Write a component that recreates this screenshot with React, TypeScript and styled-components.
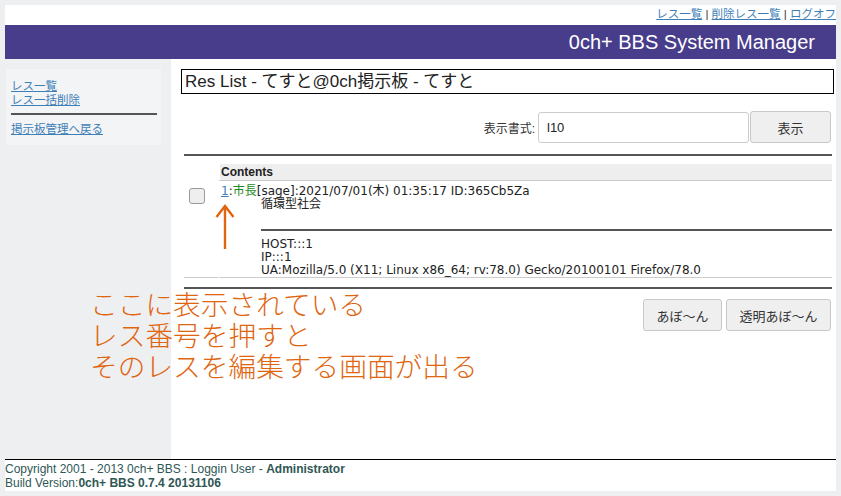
import React from "react";
import styled, { createGlobalStyle } from "styled-components";

const GlobalStyle = createGlobalStyle`
  body {
    margin: 0;
    background: #eeeff1;
    font-family: "Liberation Sans", Arial, "Noto Sans CJK JP", sans-serif;
    color: #222;
  }
`;

const App = () => {
  return (
    <>
      <GlobalStyle />
      <Page>
        <TopLinks>
          <Link href="#">レス一覧</Link> | <Link href="#">削除レス一覧</Link> |{" "}
          <Link href="#">ログオフ</Link>
        </TopLinks>
        <Header>0ch+ BBS System Manager</Header>
        <Body>
          <Sidebar>
            <Menu>
              <Link href="#">レス一覧</Link>
              <Link href="#">レス一括削除</Link>
              <MenuRule />
              <Link href="#">掲示板管理へ戻る</Link>
            </Menu>
          </Sidebar>
          <Main>
            <TitleBox>Res List - てすと@0ch掲示板 - てすと</TitleBox>
            <FormRow>
              <Label>表示書式:</Label>
              <Input defaultValue="l10" />
              <Button $width={81}>表示</Button>
            </FormRow>
            <Rule $top={11} />
            <Table>
              <thead>
                <tr>
                  <BlankHead />
                  <HeadCell>Contents</HeadCell>
                </tr>
              </thead>
              <tbody>
                <tr>
                  <CheckCell>
                    <Check type="checkbox" />
                  </CheckCell>
                  <ResCell>
                    <ResLine>
                      <Num href="#">1</Num>:<Name>市長</Name>[sage]:2021/07/01(木) 01:35:17 ID:365Cb5Za
                    </ResLine>
                    <ResBody>
                      <div>循環型社会</div>
                      <ResRule />
                      <div>HOST:::1</div>
                      <div>IP:::1</div>
                      <div>UA:Mozilla/5.0 (X11; Linux x86_64; rv:78.0) Gecko/20100101 Firefox/78.0</div>
                    </ResBody>
                  </ResCell>
                </tr>
              </tbody>
            </Table>
            <Rule $top={9} />
            <ActionRow>
              <Button $width={79}>あぼ〜ん</Button>
              <Button $width={105}>透明あぼ〜ん</Button>
            </ActionRow>
          </Main>
        </Body>
        <Footer>
          Copyright 2001 - 2013 0ch+ BBS : Loggin User - <b>Administrator</b>
          <br />
          Build Version:<b>0ch+ BBS 0.7.4 20131106</b>
        </Footer>
        <Note>
          <Arrow viewBox="0 0 20 46">
            <path d="M10 45 V2 M1.5 13 L10 2 L18.5 13" fill="none" stroke="#e0650f" strokeWidth="2.4" />
          </Arrow>
          <NoteText>
            ここに表示されている
            <br />
            レス番号を押すと
            <br />
            そのレスを編集する画面が出る
          </NoteText>
        </Note>
      </Page>
    </>
  );
};

export default App;

const Page = styled.div`
  position: relative;
  margin: 5px;
  width: 831px;
  height: 486px;
  background: white;
`;

const TopLinks = styled.div`
  height: 20px;
  line-height: 19px;
  text-align: right;
  font-size: 11.5px;
  color: #333;
`;

const Link = styled.a`
  color: #3f7fb8;
  text-decoration: underline;
  font-size: 11.5px;
`;

const Header = styled.div`
  height: 34px;
  line-height: 34px;
  background: #483d8b;
  color: white;
  font-size: 20px;
  text-align: right;
  padding-right: 21px;
`;

const Body = styled.div`
  display: flex;
  height: 400px;
`;

const Sidebar = styled.div`
  width: 166px;
  flex-shrink: 0;
  background: #eeeff1;
  padding-top: 10px;
  box-sizing: border-box;
`;

const Menu = styled.div`
  display: flex;
  flex-direction: column;
  margin-left: 1px;
  width: 155px;
  height: 76px;
  box-sizing: border-box;
  padding: 10px 4px 0 5px;
  background: #f3f4f5;
  line-height: 14px;
`;

const MenuRule = styled.div`
  height: 2px;
  background: #555;
  margin: 6px 0 7px 0;
`;

const Main = styled.div`
  flex: 1;
  padding: 10px 2px 0 10px;
`;

const TitleBox = styled.div`
  height: 25px;
  box-sizing: border-box;
  border: 1px solid #000;
  font-size: 17px;
  line-height: 23px;
  padding-left: 3px;
`;

const FormRow = styled.div`
  display: flex;
  justify-content: flex-end;
  align-items: center;
  margin-top: 17px;
  padding-right: 3px;
`;

const Label = styled.span`
  font-size: 12px;
  margin-right: 3px;
  color: #333;
`;

const Input = styled.input`
  width: 211px;
  height: 31px;
  box-sizing: border-box;
  border: 1px solid #ccc;
  border-radius: 3px;
  padding: 0 8px;
  font-family: "Liberation Sans", Arial, sans-serif;
  font-size: 13px;
  color: #222;
  outline: none;
`;

const Button = styled.button<{ $width: number }>`
  width: ${(p) => p.$width}px;
  height: 32px;
  margin-left: 1px;
  box-sizing: border-box;
  border: 1px solid #c8c8c8;
  border-radius: 3px;
  background: #efeff0;
  font-family: "Liberation Sans", Arial, "Noto Sans CJK JP", sans-serif;
  font-size: 13px;
  color: #333;
`;

const Rule = styled.div<{ $top: number }>`
  height: 2px;
  background: #555;
  margin: ${(p) => p.$top}px 2px 0 3px;
`;

const Table = styled.table`
  margin: 8px 2px 0 3px;
  width: calc(100% - 5px);
  border-collapse: separate;
  border-spacing: 0;
`;

const BlankHead = styled.th`
  width: 34px;
  padding: 0;
`;

const HeadCell = styled.th`
  background: #eeeeee;
  text-align: left;
  font-size: 12px;
  height: 16px;
  padding: 0 0 0 1px;
  border-left: 2px solid white;
  border-bottom: 1px solid #ccc;
`;

const CheckCell = styled.td`
  vertical-align: top;
  padding: 7px 0 0 5px;
  border-bottom: 1px solid #ccc;
`;

const Check = styled.input`
  appearance: none;
  display: block;
  margin: 0;
  width: 16px;
  height: 16px;
  border: 1px solid #9a9a9a;
  border-radius: 3px;
  background: #eeeeee;
`;

const ResCell = styled.td`
  padding: 4px 0 0 1px;
  border-left: 2px solid white;
  border-bottom: 1px solid #ccc;
  font-family: "DejaVu Sans", "Noto Sans CJK JP", sans-serif;
  font-size: 12px;
  color: #222;
`;

const ResLine = styled.div`
  line-height: 13px;
`;

const Num = styled.a`
  color: #3f7fb8;
  text-decoration: underline;
`;

const Name = styled.span`
  color: #228b22;
`;

const ResBody = styled.div`
  padding-left: 40px;
  line-height: 13px;
`;

const ResRule = styled.div`
  height: 2px;
  background: #555;
  margin: 18px 0 7px 0;
`;

const ActionRow = styled.div`
  display: flex;
  justify-content: flex-end;
  gap: 3px;
  margin-top: 10px;
  padding-right: 3px;
`;

const Footer = styled.div`
  border-top: 1px solid #000;
  padding-top: 2px;
  font-size: 12px;
  line-height: 14px;
  color: #2f5755;
`;

const Note = styled.div`
  position: absolute;
  left: 85px;
  top: 199px;
  pointer-events: none;
`;

const Arrow = styled.svg`
  position: absolute;
  left: 125px;
  top: 0;
  width: 20px;
  height: 46px;
`;

const NoteText = styled.div`
  position: absolute;
  left: 0;
  top: 84px;
  width: 440px;
  font-family: "Noto Sans CJK JP", sans-serif;
  font-weight: 300;
  font-size: 27.7px;
  line-height: 31px;
  color: #e0650f;
`;
